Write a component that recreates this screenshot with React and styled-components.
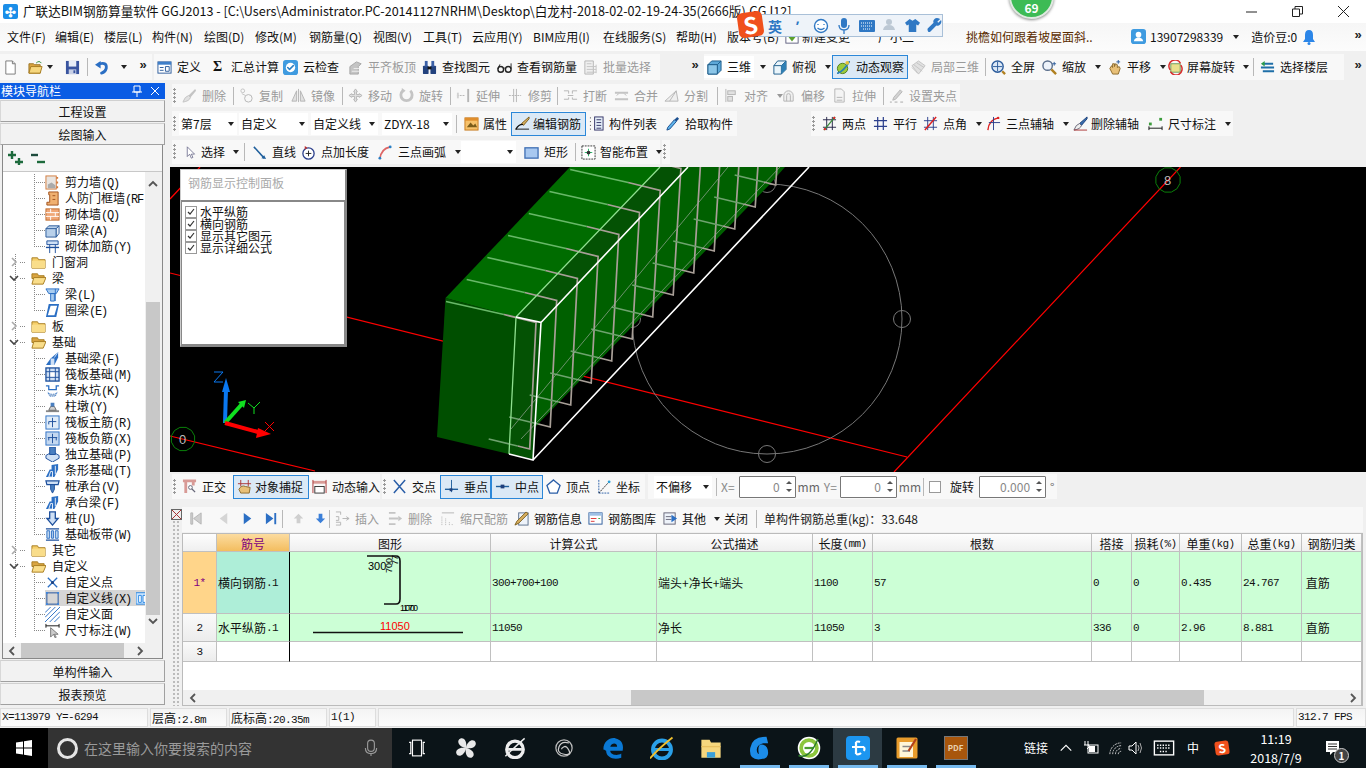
import React from "react"
import styled, { createGlobalStyle } from "styled-components"

const UI = `"Noto Sans CJK SC", "Noto Sans", sans-serif`
const MONO = `"Liberation Mono", "Noto Sans CJK SC", monospace`

const Global = createGlobalStyle`
  html, body { margin: 0; padding: 0; background: #f0f0f0; overflow: hidden; }
  * { box-sizing: border-box; }
`

const Page = styled.div`
  position: relative;
  width: 1366px;
  height: 768px;
  overflow: hidden;
  display: flex;
  flex-direction: column;
  background: #f0f0f0;
  color: #111;
  font: 12px/16px ${UI};
`

/* ---------- icons ---------- */
const S = { fill: "none", strokeLinecap: "round", strokeLinejoin: "round" }
const icons = {
  new: <><path d="M3 1h7l3 3v11H3z" fill="#fff" stroke="#777" /><path d="M10 1v3h3" fill="#ddd" stroke="#777" /></>,
  open: <><path d="M1 4h5l1 1h6v9H1z" fill="#d9a441" stroke="#9a7424" /><path d="M3 7h12l-2 7H1z" fill="#f6d77e" stroke="#a67c20" /><path d="M9 3q3-3 5 0" stroke="#2c8a3c" {...S} /></>,
  save: <><rect x="1" y="1" width="14" height="14" fill="#39549f" /><rect x="4" y="1" width="8" height="6" fill="#e8edf7" /><rect x="4" y="10" width="8" height="5" fill="#c8d0e6" /><rect x="9" y="11" width="2" height="3" fill="#39549f" /></>,
  undo: <><path d="M5 4Q13 2 12 9Q11 13 7 14" stroke="#2b6fc4" strokeWidth="3" {...S} /><path d="M0 5l6-4v8z" fill="#2b6fc4" /></>,
  define: <><rect x="1" y="2" width="14" height="12" fill="#fff" stroke="#2a5a9a" /><rect x="1" y="2" width="14" height="3" fill="#3f7fc9" /><path d="M3 8h4M3 11h4M9 7v5h4V7z" stroke="#2a5a9a" fill="none" /></>,
  cloud: <><rect x="0" y="0" width="16" height="16" rx="3" fill="#3f9be0" /><circle cx="8" cy="8" r="5" fill="#fff" /><path d="M5 8l2 2 4-4" stroke="#2b7fc4" strokeWidth="1.6" {...S} /></>,
  alignTop: <><path d="M2 15V7l7-5 5 2-3 3v8z" fill="#bbb" stroke="#999" /><path d="M4 12h8M6 9h6" stroke="#eee" /></>,
  binoc: <><rect x="1" y="6" width="6" height="9" rx="1" fill="#23427e" /><rect x="9" y="6" width="6" height="9" rx="1" fill="#23427e" /><rect x="3" y="1" width="3" height="6" fill="#3a5fa6" /><rect x="10" y="1" width="3" height="6" fill="#3a5fa6" /><rect x="6" y="7" width="4" height="3" fill="#111" /></>,
  glasses: <><circle cx="4" cy="10" r="3" stroke="#222" strokeWidth="1.5" fill="none" /><circle cx="12" cy="10" r="3" stroke="#222" strokeWidth="1.5" fill="none" /><path d="M7 9q1-1 2 0M1 9l2-4M15 9V4" stroke="#222" {...S} /></>,
  batch: <><path d="M2 1h9v14H2z" fill="#eee" stroke="#aaa" /><path d="M4 4h5M4 7h10M4 10h10M4 13h10M14 5v9" stroke="#bbb" fill="none" /></>,
  cube: <><path d="M1 5l4-4h10v10l-4 4H1z" fill="#5ea8d8" stroke="#1d5c8a" /><path d="M1 5h10v10M11 5l4-4" stroke="#1d5c8a" fill="none" /><path d="M1 5h10v10H1z" fill="#8cc6e8" stroke="#1d5c8a" /></>,
  top: <><path d="M2 6l4-5h9v9l-5 5H2z" fill="#eaf5fb" stroke="#1d5c8a" /><path d="M2 6h8v9M10 6l5-5" stroke="#1d5c8a" fill="none" /><path d="M10 6l5-5v9l-5 5z" fill="#2f7fb4" /></>,
  orbit: <><circle cx="7" cy="9" r="5.5" fill="#9ecb3a" stroke="#4d7c1a" /><path d="M2 14Q8 12 14 2" stroke="#2a7fb5" strokeWidth="2" {...S} /><circle cx="12" cy="3" r="2" fill="#e8c23a" /></>,
  local3d: <><path d="M1 6l7-5 7 5-7 9z" fill="#ddd" stroke="#bbb" /><path d="M3 5l9 7M6 3l8 5M1 8l6 6" stroke="#bbb" fill="none" /></>,
  fit: <><circle cx="7" cy="7" r="6" fill="#dbe8f6" stroke="#2c5c9c" strokeWidth="1.5" /><path d="M7 2v10M2 7h10" stroke="#2c5c9c" /><path d="M12 12l3 3" stroke="#b08020" strokeWidth="2.5" /></>,
  zoom: <><circle cx="6" cy="6" r="5" fill="#eef3fa" stroke="#5b6f8c" strokeWidth="1.5" /><path d="M10 10l5 5" stroke="#b08020" strokeWidth="2.5" /><path d="M13 2v4M11 4h4" stroke="#2c5c9c" /></>,
  pan: <><path d="M3 9l2-3 1 2V4h2v3l1-3 2 1v3l2-1 1 2-2 6H6z" fill="#e8c078" stroke="#8c6a2c" /><path d="M12 0v4M10 2h4" stroke="#2c5c9c" /></>,
  spin: <><rect x="3" y="4" width="10" height="9" fill="#eadf8c" stroke="#6a9c5c" /><path d="M2 10A6.500 6.500 0 0 1 13 3" stroke="#d82c2c" strokeWidth="1.6" {...S} /><path d="M14 6A6.500 6.500 0 0 1 3 13" stroke="#d82c2c" strokeWidth="1.6" {...S} /></>,
  floor: <><path d="M1 8h14M3 12h12M4 4h10" stroke="#1f6fa8" strokeWidth="2" /><path d="M5 1L1 4l4 3z" fill="#2c9c4c" /></>,
  erase: <><path d="M14 1L7 8l2 2 6-7z" fill="#bbb" /><path d="M7 8q-4 1-6 7 7-1 8-5z" fill="#ddd" stroke="#bbb" /></>,
  copy: <><circle cx="4" cy="3" r="2" stroke="#bbb" fill="none" /><circle cx="10" cy="11" r="4" stroke="#aaa" fill="none" /><path d="M3 6l4 2" stroke="#bbb" /></>,
  mirror: <><path d="M1 14L6 3v11zM15 14L10 3v11z" fill="#ddd" stroke="#aaa" /><path d="M8 1v14" stroke="#aaa" /></>,
  move: <path d="M8 1l2 3H9v3h3V6l3 2-3 2V9H9v3h1l-2 3-2-3h1V9H4v1L1 8l3-2v1h3V4H6z" fill="#ddd" stroke="#aaa" />,
  rotate: <><path d="M4 3A6 6 0 1 0 12 3" stroke="#bbb" strokeWidth="3" fill="none" /><path d="M3 0v6l4-3z" fill="#bbb" /></>,
  extend: <><path d="M1 8h8" stroke="#aaa" strokeDasharray="2 1" /><rect x="1" y="5" width="2" height="6" fill="#ccc" /><path d="M13 1v14" stroke="#aaa" strokeWidth="2" /></>,
  trim: <><path d="M1 8h13" stroke="#aaa" strokeDasharray="2 1" /><path d="M6 1v14M9 1v14" stroke="#aaa" /></>,
  breakIc: <><path d="M1 3h5v3M15 3h-5v3M1 12h5v-2M15 12h-5v-2" stroke="#aaa" fill="none" /><path d="M5 8h6" stroke="#aaa" /></>,
  merge: <><path d="M1 5h14M1 12h14" stroke="#bbb" strokeWidth="2" /><path d="M3 8l2-2M13 8l-2-2" stroke="#aaa" fill="none" /></>,
  split: <><path d="M1 14h14L13 3z" stroke="#aaa" fill="#eee" /><path d="M6 14l7-11" stroke="#aaa" /></>,
  alignIc: <><path d="M2 1v14" stroke="#aaa" /><rect x="4" y="3" width="8" height="4" fill="#ddd" stroke="#aaa" /><rect x="4" y="9" width="5" height="5" fill="#ddd" stroke="#aaa" /></>,
  offset: <><path d="M3 14V8a5 5 0 0 1 10 0v6z" fill="#eee" stroke="#aaa" /><path d="M6 14V8a2 2 0 0 1 4 0v6" stroke="#aaa" fill="none" /></>,
  stretch: <><path d="M3 1h7l3 3v11H3z" fill="#f4f4f4" stroke="#aaa" /><path d="M5 10h6M5 13h6" stroke="#aaa" /></>,
  grips: <><path d="M12 2L5 10l-1 3 3-1 7-8z" fill="#ccc" stroke="#aaa" /><path d="M1 15h2M6 15h3M12 15h3" stroke="#999" /></>,
  prop: <><rect x="1" y="2" width="14" height="13" fill="#f6c16a" stroke="#c57a1f" /><path d="M1 2h14v3H1z" fill="#e08e2c" /><path d="M3 12l4-5 3 3 2-2 2 4z" fill="#7a5c1a" /></>,
  editBar: <><path d="M15 1L7 8l2 2 6-7z" fill="#d9b060" stroke="#7a5c1a" /><path d="M1 14q3-5 7-5" stroke="#111" strokeWidth="1.4" {...S} /><path d="M1 14h14" stroke="#111" /></>,
  list: <><path d="M1 2h2M1 6h2M1 10h2M1 14h2" stroke="#333" strokeDasharray="1 1" /><rect x="6" y="1" width="9" height="14" fill="#e4eef8" stroke="#336" /><path d="M8 4h5M8 7h5M8 10h5M8 13h5" stroke="#336" /></>,
  pick: <><path d="M13 1l2 2-3 3-2-2z" fill="#1c4f8f" /><path d="M10 4l2 2-7 8-3 1 1-3z" fill="#5fb4ea" stroke="#1c4f8f" /></>,
  twoPt: <><path d="M1 4h14M1 12h14M5 1v14M11 1v14" stroke="#224" fill="none" /><path d="M2 15L14 1" stroke="#3a8a3a" strokeWidth="1.4" /><circle cx="13" cy="2" r="1.2" fill="#d22" /><circle cx="3" cy="14" r="1.2" fill="#d22" /></>,
  parallel: <path d="M1 5h14M1 11h14M5 1v14M11 1v14" stroke="#2b3f8c" strokeWidth="1.3" fill="none" />,
  angle: <><path d="M1 5h14M1 12h14M5 1v14M11 1v14" stroke="#2b3f8c" fill="none" /><path d="M2 15L14 1" stroke="#d22" strokeWidth="1.6" /></>,
  arcAx: <><path d="M2 15Q3 4 13 2" stroke="#d22" strokeWidth="1.5" fill="none" /><path d="M8 1v14M3 7h12" stroke="#2b3f8c" fill="none" /><circle cx="13" cy="2" r="1.3" fill="#d22" /></>,
  delAx: <><path d="M15 1L7 8l2 2 6-7z" fill="#3a6fb0" stroke="#1c3f78" /><path d="M7 8q-4 1-6 7 7-1 8-5z" fill="#eee" stroke="#667" /><path d="M1 15h14" stroke="#a33" /></>,
  dimIc: <><path d="M1 11v4M15 11v4M1 13h14" stroke="#111" fill="none" /><rect x="1" y="7" width="3" height="3" fill="#3c9c3c" /><rect x="12" y="2" width="3" height="3" fill="#3c9c3c" /></>,
  cursor: <path d="M4 1v12l3-3 2 5 2-1-2-4h4z" fill="#fff" stroke="#6a6a8a" />,
  lineIc: <><path d="M2 2l11 12" stroke="#1f5f9c" strokeWidth="1.6" /><path d="M15 15l-5-1 3-3z" fill="#1f5f9c" /></>,
  addLen: <><circle cx="8" cy="9" r="6" stroke="#2b3f8c" strokeWidth="1.4" fill="#fff" /><path d="M8 6v6M5 9h6" stroke="#222" /><path d="M4 1l3 2-3 2z" fill="#b33" /></>,
  arc3: <><path d="M2 15Q3 4 13 2" stroke="#d66" strokeWidth="1.7" fill="none" /><circle cx="13" cy="2" r="1.5" fill="#2b7fc4" /><circle cx="2" cy="14" r="1.5" fill="#2b7fc4" /></>,
  rectIc: <rect x="1" y="3" width="14" height="11" fill="#a8c8f0" stroke="#3f6fb4" strokeWidth="1.4" />,
  smart: <><rect x="1" y="1" width="14" height="14" fill="#fff" stroke="#333" strokeDasharray="2 1" /><path d="M8 4v8M4 8h8" stroke="#2b6" /><circle cx="8" cy="8" r="2" fill="#333" /></>,
  ortho: <><path d="M1 2h14M4 2v13M12 2v5" stroke="#d89a96" strokeWidth="3" fill="none" /><path d="M9 9l5 5" stroke="#667" strokeWidth="1.4" /><circle cx="9" cy="9" r="2" stroke="#667" fill="#fff" /></>,
  snap: <><path d="M4 1v7M12 1v7M1 5h14" stroke="#a33" fill="none" /><path d="M2 11q3-5 7-3l5 1-1 6H4z" fill="#e8c078" stroke="#8c6a2c" /></>,
  inputIc: <><path d="M1 2h14v3H1z" fill="#d89a96" /><path d="M1 1v14M15 1v14" stroke="#a33" /><rect x="3" y="8" width="10" height="7" fill="#fff" stroke="#333" /></>,
  cross: <path d="M2 1l12 14M14 1L2 15" stroke="#2b5fa8" strokeWidth="1.6" />,
  perp: <><path d="M1 11h14" stroke="#1f5f9c" strokeWidth="1.5" /><path d="M8 1v13" stroke="#1f5f9c" /><rect x="6" y="10" width="3" height="3" fill="#1f3f7c" /></>,
  mid: <><path d="M1 8h14" stroke="#1f5f9c" strokeWidth="1.5" /><rect x="6" y="6" width="4" height="4" fill="#1f3f7c" /></>,
  vertex: <path d="M8 1l7 6-3 8H4L1 7z" fill="#fff" stroke="#2b5fa8" strokeWidth="1.4" />,
  coord: <><path d="M3 15V1M3 15h12" stroke="#2b5fa8" strokeDasharray="2 1" /><path d="M3 15L14 3" stroke="#222" strokeDasharray="2 1" /><circle cx="14" cy="3" r="1.5" fill="#2b9fd8" /></>,
  first: <path d="M3 2h2v12H3zM14 2v12L6 8z" fill="#c8c8c8" stroke="#aaa" />,
  prev: <path d="M12 2v12L4 8z" fill="#cfcfcf" />,
  next: <path d="M4 2v12l8-6z" fill="#2c6fc4" />,
  last: <path d="M2 2v12l8-6zM11 2h2v12h-2z" fill="#2c6fc4" />,
  up: <path d="M8 3l5 5h-3v5H6V8H3z" fill="#c8c8c8" />,
  down: <path d="M8 13l5-5h-3V3H6v5H3z" fill="#3c7fd8" />,
  ins: <><path d="M1 1h5v3M1 12h5v3H1M1 6h3v4H1" stroke="#aaa" fill="none" /><path d="M8 8h7M12 6l3 2-3 2" stroke="#aaa" fill="none" /></>,
  del: <><path d="M1 2h7M1 8h10M1 14h7" stroke="#bbb" strokeWidth="2" /><path d="M11 5l4 3-4 3" fill="#bbb" /></>,
  scale: <><path d="M2 15V5M6 15V8M10 15v-4M13 15v-1" stroke="#aaa" strokeDasharray="1 1" /><path d="M2 2h13" stroke="#aaa" /></>,
  info: <><rect x="5" y="2" width="10" height="13" fill="#eef3fa" stroke="#5b6f8c" /><path d="M13 1L3 11l-2 4 4-2L15 3z" fill="#d9b060" stroke="#7a5c1a" /></>,
  lib: <><rect x="1" y="2" width="14" height="12" fill="#fff" stroke="#2a5a9a" /><rect x="1" y="2" width="14" height="3" fill="#9ec0e4" /><path d="M3 8h6M3 11h4" stroke="#d33" /><path d="M11 8h2" stroke="#3a3" /></>,
  other: <><rect x="1" y="2" width="12" height="12" fill="#eef3fa" stroke="#667" /><path d="M3 6h6M3 9h6" stroke="#667" /><path d="M9 4l6 4-6 4z" fill="#2c6fc4" /></>,
  shear: <><rect x="1" y="1" width="11" height="14" fill="#e8e4e0" stroke="#d27a3c" /><path d="M3 10l4-2 4 3v3H3z" fill="#aaa" /><path d="M13 2v2M13 7v2M13 12v2" stroke="#d27a3c" strokeWidth="2" /></>,
  door: <path d="M4 1h10v14H2v-3h3V4H4zM8 5h3M8 9h3" fill="#f0b070" stroke="#a0501c" />,
  brick: <><rect x="1" y="2" width="14" height="12" fill="#f0a878" stroke="#c06a2c" /><path d="M1 6h14M1 10h14M6 2v4M11 6v4M6 10v4" stroke="#fff" /></>,
  hidden: <><path d="M1 6l3-3h11l-3 3v9H1z" fill="#b8d0ea" stroke="#2a5a9a" /><path d="M12 6l3-3v8l-3 4z" fill="#e8f0f8" stroke="#2a5a9a" /><path d="M1 6h11" stroke="#2a5a9a" /></>,
  rein: <><path d="M2 2h12v4H2zM5 6v9M11 6v9" fill="#cfe0f5" stroke="#1d4f9c" /><path d="M1 9h14" stroke="#1d4f9c" strokeWidth="1.5" /></>,
  tbeam: <><path d="M1 2h14l-3 5H4zM6 7h4v8H6z" fill="#a8ccf0" stroke="#2b6fc4" /><path d="M11 2v13" stroke="#2b6fc4" /></>,
  ring: <path d="M4 1h11l-3 14H1zM6 3l-3 10h7l3-10z" fill="#2b6fc4" fillRule="evenodd" />,
  fbeam: <><path d="M1 15l5-7 8-7v6l-4 8z" fill="#2b6fc4" /><path d="M6 8h4v7H6z" fill="#cfe0f5" /><path d="M10 7l4-6" stroke="#cfe0f5" /></>,
  raft: <><rect x="1" y="1" width="14" height="14" fill="#cfe0f5" stroke="#1d4f9c" strokeWidth="1.4" /><rect x="5" y="5" width="6" height="6" fill="#fff" stroke="#1d4f9c" /><path d="M1 5h4M11 5h4M1 11h4M11 11h4M5 1v4M11 1v4M5 11v4M11 11v4" stroke="#1d4f9c" /></>,
  pit: <><path d="M1 3h3v4h8V3h3" stroke="#2b6fc4" strokeWidth="1.4" fill="none" /><path d="M3 10q5 4 10 0l-2 4H5z" fill="#b8c8dc" stroke="#2b6fc4" strokeDasharray="1 1" /></>,
  pier: <><path d="M1 12h14v2H1z" fill="#888" /><path d="M4 12l2-4h4l2 4z" fill="#cfcfcf" stroke="#666" /><rect x="6" y="4" width="4" height="4" fill="#4a7fc0" /></>,
  mainBar: <><rect x="1" y="1" width="14" height="14" fill="#e0ecf8" stroke="#2b6fc4" /><path d="M8 3v10M4 7h8M4 7v3" stroke="#1d4f9c" fill="none" /></>,
  negBar: <><rect x="1" y="1" width="14" height="14" fill="#c4d8f0" stroke="#2b6fc4" /><path d="M8 3v10M3 7h10M4 7v3M12 7v3" stroke="#1d4f9c" fill="none" /></>,
  iso: <><path d="M1 9l7-4 7 4v3l-7 4-7-4z" fill="#cfe0f5" stroke="#1d4f9c" /><rect x="5" y="0" width="6" height="8" fill="#4a7fc0" stroke="#1d4f9c" /></>,
  strip: <><path d="M1 15l4-8h2v-5l7-1v6l-4 8z" fill="#2b6fc4" /><path d="M4 15l2-6h2v6zM11 3v9" stroke="#eef3fa" fill="none" /></>,
  cap: <><path d="M1 2h14l-1 4H2z" fill="#cfe0f5" stroke="#1d4f9c" strokeWidth="1.3" /><path d="M6 6h4v5l-2 4-2-4z" fill="#4a7fc0" stroke="#1d4f9c" /></>,
  pile: <><path d="M5 1h6v7h3l-6 7-6-7h3z" fill="#cfe0f5" stroke="#1d4f9c" strokeWidth="1.4" /></>,
  band: <><path d="M1 2h14M1 14h14" stroke="#1d4f9c" strokeWidth="1.5" /><path d="M2 4h3v8H2zM7 4h2v8H7zM11 4h3v8h-3z" fill="#bcd4ee" stroke="#2b6fc4" /></>,
  point: <><path d="M3 3l10 10M13 3L3 13" stroke="#2b6fc4" strokeWidth="1.4" /><circle cx="8" cy="8" r="1.6" fill="#1d3f7c" /></>,
  rectLine: <><rect x="2" y="2" width="12" height="12" fill="none" stroke="#1d4f9c" /><path d="M1 1h2v2H1zM13 1h2v2h-2zM1 13h2v2H1zM13 13h2v2h-2z" fill="#3c86e0" /></>,
  hatch: <path d="M0 6l6-6M0 11L11 0M0 16L16 0M5 16L16 5M10 16l6-6" stroke="#2b6fc4" />,
  dimCur: <><path d="M1 3h14M1 1v4M15 1v4" stroke="#111" /><path d="M6 5v10l3-3 2 4 1-1-2-3h4z" fill="#ccc" stroke="#777" /></>,
  minilist: <><rect x="0" y="2" width="14" height="13" fill="#cbe6ff" stroke="#1c7fe0" /><path d="M3 5h3v8H3zM8 5h3v8H8z" fill="#fff" stroke="#1c7fe0" /></>,
  plus: <><path d="M5 1v8M1 5h8" stroke="#1d6a3c" strokeWidth="2.4" /><path d="M12 8v7M8 12h8" stroke="#1d6a3c" strokeWidth="2.4" /></>,
  minus: <><path d="M1 5h7" stroke="#1d4a3c" strokeWidth="2.4" /><path d="M7 12h8" stroke="#1d6a3c" strokeWidth="2.4" /></>,
  folder: <><path d="M1 3h6l1 2h7v9H1z" fill="#f6cf6a" stroke="#a67c20" /><path d="M1 6h14v8H1z" fill="#f9dd8a" /></>,
  folderOpen: <><path d="M1 3h6l1 2h6v3H1z" fill="#d9a441" stroke="#a67c20" /><path d="M3 7h13l-3 7H1z" fill="#f9dd8a" stroke="#a67c20" /></>,
  taskview: <><rect x="4" y="1" width="8" height="14" fill="none" stroke="#fff" /><path d="M1 3h1.500v10H1M15 3h-1.500v10H15" stroke="#fff" fill="none" /></>,
  fan: <path d="M8 8C2 7 1 2 4 1s5 3 4 7c1-6 6-7 7-4s-3 5-7 4c6 1 7 6 4 7s-5-3-4-7c-1 6-6 7-7 4s3-5 7-4z" fill="#e8e8e8" />,
  ieWhite: <><circle cx="8" cy="9" r="6" fill="none" stroke="#eee" strokeWidth="2.4" /><path d="M3 9h10" stroke="#eee" strokeWidth="2" /><path d="M1 14Q7 8 15 1" stroke="#eee" fill="none" /></>,
  swirl: <><circle cx="8" cy="8" r="6.500" fill="none" stroke="#bbb" /><path d="M12 4Q6 2 4 7t4 6 4-3-4-3-2 2" stroke="#ccc" fill="none" /></>,
  edge: <path d="M1 9C1 3 6 0 10 1s6 4 5 9H6c0 3 5 4 8 2v3c-5 2-11 0-11-5 0 0-1-1-2-1zM6 7h5c0-3-4-3-5 0z" fill="#0a78d4" fillRule="evenodd" />,
  ie: <><circle cx="8" cy="9" r="6" fill="none" stroke="#2aa0e8" strokeWidth="2.6" /><path d="M3 9h10" stroke="#2aa0e8" strokeWidth="2" /><path d="M0 15Q6 8 15 1" stroke="#f0c030" strokeWidth="1.2" fill="none" /></>,
  explorer: <><path d="M1 2h6l1 2h7v11H1z" fill="#f6d77e" /><path d="M5 15v-4h6v4" fill="#3a9fd8" /><path d="M1 7h14" stroke="#e8c060" /></>,
  gApp: <path d="M12 1Q3 1 2 8t5 7 6-4-3-5-3 3 2 3q-3 0-3-3t4-4h3z" fill="#1c8ce8" />,
  ieGreen: <><circle cx="8" cy="8" r="7" fill="#8cc63c" stroke="#fff" /><circle cx="8" cy="8" r="4" fill="#fff" /><path d="M5 8h6" stroke="#4a9c2c" strokeWidth="1.5" /><path d="M1 13Q8 16 14 2" stroke="#2c7c2c" fill="none" /></>,
  note: <><rect x="1" y="1" width="14" height="14" rx="1" fill="#e89c2c" /><rect x="3" y="4" width="9" height="10" fill="#fff6d8" /><path d="M5 7h5M5 10h5" stroke="#888" /><path d="M14 2l-5 8" stroke="#b3401c" strokeWidth="1.5" /></>,
  batt: <><rect x="5" y="5" width="10" height="8" fill="none" stroke="#fff" /><rect x="6" y="6" width="6" height="6" fill="#fff" /><path d="M2 1v4M5 1v4M1 5h5v2l-2 2" stroke="#fff" fill="none" /></>,
  wifi: <path d="M2 14a12 12 0 0 1 12-12M5 14a9 9 0 0 1 9-9M8 14a6 6 0 0 1 6-6M11 14a3 3 0 0 1 3-3" stroke="#ddd" strokeDasharray="2 1" fill="none" />,
  vol: <><path d="M1 6h3l4-4v12l-4-4H1z" fill="none" stroke="#fff" /><path d="M10 5q2 3 0 6M12 3q3 5 0 10" stroke="#aaa" fill="none" /></>,
  kbd: <><rect x="1" y="3" width="14" height="10" fill="none" stroke="#fff" /><path d="M3 6h10M3 8h10M5 10.500h6" stroke="#fff" strokeDasharray="1 1" /></>,
  up2: <path d="M2 11l6-6 6 6" stroke="#fff" fill="none" strokeWidth="1.3" />,
  mic: <><rect x="5" y="1" width="6" height="10" rx="3" fill="none" stroke="#999" /><path d="M3 8q0 5 5 5t5-5M8 13v2" stroke="#999" fill="none" /></>,
  user: <><rect x="0" y="0" width="16" height="16" rx="3" fill="#3f9be0" /><circle cx="8" cy="6" r="3" fill="#fff" /><path d="M3 13q1-4 5-4t5 4z" fill="#fff" /></>,
  bell: <><path d="M8 1q4 0 4 5v4l2 3H2l2-3V6q0-5 4-5z" fill="#2c86e8" /><circle cx="8" cy="14.500" r="1.500" fill="#2c86e8" /></>,
  newChange: <><rect x="1" y="1" width="14" height="14" fill="#fff" stroke="#557" /><path d="M8 5l4 3-4 5-4-5z" fill="#5aa02c" /></>,
  notifBox: <><path d="M1 1h13v11H8l-3 3v-3H1z" fill="#fff" /><path d="M3 4h9M3 6.500h9M3 9h9" stroke="#333" /></>,
  smile: <><circle cx="8" cy="8" r="6.500" stroke="#2f78c4" strokeWidth="1.4" fill="#fff" /><path d="M5 6v1M11 6v1M4.500 10q3.500 3 7 0" stroke="#2f78c4" strokeWidth="1.3" fill="none" /></>,
  imeMic: <><rect x="5" y="0" width="6" height="10" rx="3" fill="#2f78c4" /><path d="M3 7q0 5 5 5t5-5M8 12v4" stroke="#2f78c4" fill="none" strokeWidth="1.3" /></>,
  imeKbd: <><rect x="0" y="2" width="16" height="12" rx="1" fill="#2f78c4" /><path d="M2 5h12M2 8h12M4 11h8" stroke="#fff" strokeDasharray="1 1" /></>,
  imeUser: <><circle cx="7" cy="4" r="3" fill="#bcc8d4" /><path d="M1 12q1-5 6-5t6 5z" fill="#bcc8d4" /></>,
  shirt: <path d="M5 1l3 2 3-2 5 4-2 3-2-1v8H4V7L2 8 0 5z" fill="#2f78c4" />,
  wrench: <path d="M14 1l-3 3 1 1 3-3q1 3-1 5t-4 1l-6 6q-2 2-3 0t0-3l6-6q-1-2 1-4t6 0z" fill="#2f78c4" />,
}

const IconBox = styled.svg`
  display: block;
  flex: none;
  width: ${p => p.$s || 15}px;
  height: ${p => p.$s || 15}px;
  opacity: ${p => (p.$dim ? 0.85 : 1)};
`
const Ic = ({ n, s, dim }) => (
  <IconBox viewBox="0 0 16 16" $s={s} $dim={dim}>{icons[n]}</IconBox>
)

/* ---------- title and menu ---------- */
const TitleBar = styled.div`
  height: 23px;
  background: #fff;
  display: flex;
  align-items: center;
  padding-left: 3px;
  gap: 5px;
  font-size: 12.600px;
  white-space: nowrap;
`
const AppLogo = styled.div`
  width: 15px;
  height: 15px;
  border-radius: 2px;
  background: #1b8ee8;
  color: #fff;
  font: bold 13px/15px ${UI};
  text-align: center;
`
const WinButtons = styled.div`
  position: absolute;
  top: 0;
  right: 0;
  height: 23px;
  display: flex;
`
const WinBtn = styled.div`
  width: 46px;
  display: flex;
  align-items: center;
  justify-content: center;
`
const MenuBar = styled.div`
  height: 29px;
  display: flex;
  align-items: center;
  background: linear-gradient(#f6f6f6, #fcfcfc);
  white-space: nowrap;
`
const MenuItem = styled.div`
  width: ${p => p.$w}px;
  flex: none;
  padding-left: 7px;
  display: flex;
  align-items: center;
  gap: ${p => p.$gap ?? 3}px;
`
const NewsText = styled.div`
  width: ${p => p.$w}px;
  flex: none;
  color: #5a2c00;
  padding-left: 4px;
`

/* ---------- toolbars ---------- */
const Row = styled.div`
  height: ${p => p.$h}px;
  display: flex;
  align-items: ${p => p.$align || "center"};
  padding-left: ${p => p.$pl || 0}px;
  padding-top: ${p => p.$pt || 0}px;
  flex: none;
`
const Bar = styled.div`
  height: ${p => p.$h || 26}px;
  width: ${p => p.$w ? `${p.$w}px` : "auto"};
  margin-left: ${p => p.$ml || 0}px;
  background: #f8f8f8;
  display: flex;
  align-items: center;
  flex: none;
  white-space: nowrap;
`
const Grip = styled.div`
  flex: none;
  width: ${p => p.$w || 6}px;
  height: 16px;
  margin-left: ${p => p.$ml || 1}px;
  background: radial-gradient(circle at 1.500px 1.500px, #999 1px, transparent 1.300px) 0 0 / 3px 4px repeat-y;
`
const Sep = styled.div`
  flex: none;
  width: ${p => p.$w}px;
  height: 18px;
  background: linear-gradient(#b8b8b8, #b8b8b8) center / 1px 100% no-repeat;
`
const ToolBtn = styled.div`
  flex: none;
  width: ${p => p.$w}px;
  height: ${p => (p.$on ? 24 : 22)}px;
  padding-left: 3px;
  display: flex;
  align-items: center;
  gap: ${p => p.$gap ?? 5}px;
  color: ${p => (p.$off ? "#9a9a9a" : "#111")};
  background: ${p => (p.$on ? "#dbe9f6" : p.$white ? "#fff" : "transparent")};
  border: ${p => (p.$on ? "1px solid #2b87d8" : "none")};
`
const Caret = styled.i`
  flex: none;
  width: 0;
  height: 0;
  margin-left: ${p => p.$ml ?? 4}px;
  border: 3px solid transparent;
  border-top: 4px solid ${p => p.$c || "#222"};
  border-bottom: 0;
`
const Tool = ({ n, t, w, on, off, caret, gap, s, white }) => (
  <ToolBtn $w={w} $on={on} $off={off} $gap={gap} $white={white}>
    {n && <Ic n={n} s={s} dim={off} />}
    {t && <span>{t}</span>}
    {caret && <Caret $c={off ? "#999" : "#222"} />}
  </ToolBtn>
)
const Tools = ({ items }) =>
  items.map((it, i) => (it.sep ? <Sep key={i} $w={it.sep} /> : <Tool key={i} {...it} />))

const Select = styled.div`
  flex: none;
  width: ${p => p.$w}px;
  height: 22px;
  margin-left: ${p => p.$ml || 0}px;
  padding: 0 3px 0 2px;
  background: ${p => (p.$plain ? "transparent" : "#fff")};
  display: flex;
  align-items: center;
  justify-content: ${p => (p.$end ? "flex-end" : "space-between")};
`
const More = styled.div`
  flex: none;
  width: ${p => p.$w}px;
  margin-left: ${p => p.$ml || 0}px;
  font: bold 13px/14px "Liberation Sans", sans-serif;
  text-align: center;
  height: 18px;
  color: #222;
`
const IconSigma = styled.span`
  width: 15px;
  font: bold 14px/16px "Liberation Serif", serif;
  text-align: center;
`
const row1b = [
  { n: "define", t: "定义", w: 53 },
  { n: "cloud", t: "云检查", w: 65 },
  { n: "alignTop", t: "平齐板顶", w: 74, off: true },
  { n: "binoc", t: "查找图元", w: 75 },
  { n: "glasses", t: "查看钢筋量", w: 86 },
  { n: "batch", t: "批量选择", w: 80, off: true },
]
const row1c = [
  { n: "top", t: "俯视", w: 63, caret: true },
  { n: "orbit", t: "动态观察", w: 76, on: true },
  { n: "local3d", t: "局部三维", w: 75, off: true },
  { sep: 5 },
  { n: "fit", t: "全屏", w: 51 },
  { n: "zoom", t: "缩放", w: 65, caret: true },
  { n: "pan", t: "平移", w: 61, caret: true },
  { n: "spin", t: "屏幕旋转", w: 84, caret: true, gap: 4 },
  { sep: 8 },
  { n: "floor", t: "选择楼层", w: 80 },
]
const row2 = [
  { n: "erase", t: "删除", w: 52, off: true },
  { sep: 5 },
  { n: "copy", t: "复制", w: 52, off: true },
  { n: "mirror", t: "镜像", w: 51, off: true },
  { sep: 6 },
  { n: "move", t: "移动", w: 51, off: true },
  { n: "rotate", t: "旋转", w: 51, off: true },
  { sep: 6 },
  { n: "extend", t: "延伸", w: 52, off: true },
  { n: "trim", t: "修剪", w: 49, off: true },
  { sep: 6 },
  { n: "breakIc", t: "打断", w: 51, off: true },
  { n: "merge", t: "合并", w: 50, off: true },
  { n: "split", t: "分割", w: 52, off: true },
  { sep: 8 },
  { n: "alignIc", t: "对齐", w: 57, off: true, caret: true },
  { n: "offset", t: "偏移", w: 51, off: true },
  { n: "stretch", t: "拉伸", w: 52, off: true },
  { sep: 5 },
  { n: "grips", t: "设置夹点", w: 75, off: true },
]
const row3a = [
  { sep: 9 },
  { n: "prop", t: "属性", w: 50, gap: 4 },
  { n: "editBar", t: "编辑钢筋", w: 75, on: true, gap: 3 },
  { n: "list", t: "构件列表", w: 76 },
  { n: "pick", t: "拾取构件", w: 74 },
]
const row3b = [
  { n: "twoPt", t: "两点", w: 51 },
  { n: "parallel", t: "平行", w: 50 },
  { n: "angle", t: "点角", w: 63, caret: true },
  { n: "arcAx", t: "三点辅轴", w: 87, caret: true },
  { n: "delAx", t: "删除辅轴", w: 75, gap: 3 },
  { n: "dimIc", t: "尺寸标注", w: 88, caret: true },
]
const row4a = [
  { n: "cursor", t: "选择", w: 58, caret: true, gap: 4, s: 13 },
  { sep: 10 },
  { n: "lineIc", t: "直线", w: 49 },
  { n: "addLen", t: "点加长度", w: 77 },
  { n: "arc3", t: "三点画弧", w: 84, caret: true },
]
const row4b = [
  { n: "rectIc", t: "矩形", w: 51 },
  { sep: 6 },
  { n: "smart", t: "智能布置", w: 84, caret: true, gap: 4 },
]
const snapA = [
  { n: "ortho", t: "正交", w: 49 },
]
const snapB = [
  { n: "snap", t: "对象捕捉", w: 76, on: true, gap: 3 },
  { n: "inputIc", t: "动态输入", w: 76 },
]
const snapC = [
  { n: "cross", t: "交点", w: 51 },
  { n: "perp", t: "垂点", w: 51, on: true },
  { n: "mid", t: "中点", w: 52, on: true },
  { n: "vertex", t: "顶点", w: 50 },
  { n: "coord", t: "坐标", w: 52 },
]
const gridTools = [
  { n: "first", w: 28, off: true },
  { n: "prev", w: 24, off: true },
  { n: "next", w: 24 },
  { n: "last", w: 16 },
  { sep: 11 },
  { n: "up", w: 22, off: true },
  { n: "down", w: 17 },
  { sep: 5 },
  { n: "ins", t: "插入", w: 53, off: true },
  { n: "del", t: "删除", w: 52, off: true },
  { n: "scale", t: "缩尺配筋", w: 74, off: true },
  { n: "info", t: "钢筋信息", w: 74 },
  { n: "lib", t: "钢筋图库", w: 75 },
  { n: "other", t: "其他", w: 61, caret: true, gap: 4 },
  { t: "关闭", w: 31 },
  { sep: 8 },
]

/* ---------- body ---------- */
const Body = styled.div`
  flex: none;
  height: 623px;
  display: flex;
`
const Left = styled.div`
  flex: none;
  width: 165px;
  height: 622px;
  display: flex;
  flex-direction: column;
`
const PaneHead = styled.div`
  height: 16px;
  flex: none;
  background: #0a5ce4;
  color: #fff;
  display: flex;
  align-items: center;
  padding-right: 3px;
`
const PaneTitle = styled.span`
  flex: 1;
  padding-left: 1px;
  font-size: 12px;
`
const PaneBtn = styled.div`
  flex: none;
  height: 22px;
  margin-top: 1px;
  background: #f2f2f2;
  border: 1px solid #a0a0a0;
  border-top-color: #d0d0d0;
  border-left-color: #d8d8d8;
  text-align: center;
  line-height: 21px;
  font-size: 12px;
`
const TreeFrame = styled.div`
  flex: 1;
  min-height: 0;
  margin: 0 2px 0 2px;
  border: 1px solid #888;
  border-top: 0;
  display: flex;
  flex-direction: column;
  background: #f0f0f0;
`
const TreeTools = styled.div`
  height: 26px;
  flex: none;
  display: flex;
  align-items: center;
  gap: 7px;
  padding-left: 4px;
  background: #f5f5f5;
`
const TreeBody = styled.div`
  flex: 1;
  min-height: 0;
  display: flex;
  border-top: 1px solid #c8c8c8;
`
const TreeList = styled.div`
  flex: none;
  width: 142px;
  background: #fff;
  padding-top: 2px;
  overflow: hidden;
`
const TreeRow = styled.div`
  height: 16px;
  display: flex;
  align-items: center;
  white-space: nowrap;
  overflow: hidden;
  padding-left: ${p => (p.$leaf ? 42 : 6)}px;
  gap: ${p => (p.$leaf ? 5 : 6)}px;
  font-size: 12px;
  --dot: repeating-linear-gradient(to bottom, #888 0 1px, transparent 1px 2px);
  --doth: repeating-linear-gradient(to right, #888 0 1px, transparent 1px 2px);
  background:
    ${p => (p.$rootLine ? "var(--dot) 12px 0 / 1px 16px no-repeat," : "")}
    ${p => (p.$leaf ? `var(--dot) 31px 0 / 1px ${p.$last ? 8 : 16}px no-repeat, var(--doth) 31px 8px / 11px 1px no-repeat` : "var(--doth) 17px 8px / 6px 1px no-repeat")};
`
const TreeSelBg = styled.div`
  display: flex;
  align-items: center;
  gap: 5px;
  flex: none;
  width: 100px;
  background: #d6d6d6;
`
const Chevron = styled.svg`
  flex: none;
  width: 10px;
  height: 10px;
  margin-right: 6px;
`
const Key = styled.span`
  font: 12px ${MONO};
  letter-spacing: -1.200px;
`
const VScroll = styled.div`
  flex: 1;
  display: flex;
  flex-direction: column;
  align-items: center;
  padding: 6px 0 0;
  margin-right: 2px;
`
const ThumbV = styled.div`
  width: 14px;
  height: 313px;
  margin-top: 112px;
  background: #c8c8c8;
`
const Arrow = styled.svg`
  display: block;
  flex: none;
  width: 12px;
  height: 12px;
`
const HScroll = styled.div`
  height: ${p => p.$h || 15}px;
  flex: none;
  display: flex;
  align-items: center;
  background: #f0f0f0;
  padding-left: ${p => p.$pl || 3}px;
`
const ThumbH = styled.div`
  flex: none;
  height: 15px;
  width: ${p => p.$w}px;
  margin: 0 ${p => p.$mr || 0}px 0 ${p => p.$ml || 0}px;
  background: #c8c8c8;
`
const Right = styled.div`
  flex: none;
  width: 1201px;
  padding-left: 5px;
  display: flex;
  flex-direction: column;
`
const Scene = styled.div`
  flex: none;
  position: relative;
  height: 305px;
  background: #000;
  margin-top: 3px;
`
const Canvas = styled.svg`
  display: block;
  width: 1196px;
  height: 305px;
`
const RebarPanel = styled.div`
  position: absolute;
  left: 10px;
  top: 2px;
  width: 167px;
  height: 178px;
  background: #fff;
  border: 1px solid #ccc;
  border-right: 2px solid #888;
  border-bottom: 2px solid #888;
  display: flex;
  flex-direction: column;
`
const RebarTitle = styled.div`
  height: 30px;
  padding: 5px 0 0 7px;
  color: #aaa;
`
const RebarBox = styled.div`
  flex: 1;
  border: 1px solid #888;
  border-top: 2px solid #888;
  padding: 4px 0 0 3px;
`
const CheckRow = styled.div`
  height: 12px;
  display: flex;
  align-items: center;
  gap: 3px;
  line-height: 12px;
`
const CheckMark = styled.svg`
  width: 12px;
  height: 12px;
  flex: none;
`
const Check = () => (
  <CheckMark viewBox="0 0 12 12">
    <rect x="0.500" y="0.500" width="11" height="11" fill="#fff" stroke="#999" />
    <path d="M3 6l2 2 4-5" stroke="#333" fill="none" strokeWidth="1.200" />
  </CheckMark>
)
const Label = styled.span`
  color: ${p => p.$c || "#111"};
  margin-left: ${p => p.$ml || 0}px;
  flex: none;
`
const Spin = styled.div`
  flex: none;
  width: ${p => p.$w}px;
  height: 22px;
  margin-left: ${p => p.$ml || 0}px;
  border: 1px solid #777;
  border-radius: 1px;
  background: #fff;
  color: #888;
  display: flex;
  align-items: center;
  justify-content: flex-end;
  gap: 6px;
  padding-right: 3px;
`
const SpinArrows = styled.div`
  display: flex;
  flex-direction: column;
  gap: 5px;
`
const Up = styled.i`
  display: block;
  width: 0;
  height: 0;
  border: 3px solid transparent;
  border-bottom: 3px solid #555;
  border-top: 0;
`
const Dn = styled(Up)`
  border-bottom: 0;
  border-top: 3px solid #555;
`
const CheckEmpty = styled.div`
  width: 12px;
  height: 12px;
  margin-left: 4px;
  flex: none;
  background: #fff;
  border: 1px solid #999;
`
const GridWrap = styled.div`
  flex: 1;
  min-height: 0;
  display: flex;
`
const DotStrip = styled.div`
  flex: none;
  width: 12px;
  padding: 2px 0 0 1px;
  background:
    radial-gradient(circle at 1px 1px, #bbb 1px, transparent 1.200px) 3px 14px / 3px 4px repeat-y,
    radial-gradient(circle at 1px 1px, #bbb 1px, transparent 1.200px) 7px 14px / 3px 4px repeat-y;
`
const CloseMark = styled.svg`
  display: block;
`
const GridSide = styled.div`
  flex: none;
  width: 1181px;
  display: flex;
  flex-direction: column;
`
const GridBar = styled(Bar)`
  height: 25px;
  padding: 0 0 2px 3px;
`
const TotalText = styled.span`
  margin-left: 4px;
  color: #222;
`
const GridBox = styled.div`
  flex: 1;
  min-height: 0;
  margin-top: 1px;
  border: 1px solid #bbb;
  border-right-width: 2px;
  background: #fff;
  display: flex;
  flex-direction: column;
  justify-content: space-between;
`
const Grid = styled.div`
  display: grid;
  grid-template-columns: 34px 73px 201px 166px 156px 60px 219px 40px 48px 62px 60px 60px;
  grid-template-rows: 18px 62px 28px 20px;
`
const Cell = styled.div`
  display: flex;
  align-items: center;
  justify-content: ${p => (p.$c ? "center" : "flex-start")};
  padding-left: ${p => (p.$c ? 0 : 1)}px;
  padding-top: ${p => p.$pt ?? 1}px;
  border-right: 1px solid ${p => (p.$dark ? "#000" : "#c0c0c0")};
  border-bottom: 1px solid #c0c0c0;
  background: ${p => p.$bg || "#ccffd6"};
  color: ${p => p.$color || "#111"};
  white-space: nowrap;
  overflow: hidden;
`
const Mono = styled.span`
  font: 11px ${MONO};
  letter-spacing: -0.600px;
`
const ShapeSvg = styled.svg`
  display: block;
  width: 199px;
  height: ${p => p.$h}px;
`
const HEAD = "linear-gradient(#fdfdfd, #efefef)"
const RHEAD = "linear-gradient(#fafafa, #ececec)"

/* ---------- status and taskbar ---------- */
const StatusBar = styled.div`
  flex: none;
  height: 22px;
  padding: 2px 0 1px;
  display: flex;
  gap: 2px;
  font: 11px/17px ${MONO};
  letter-spacing: -0.600px;
`
const StatusCell = styled.div`
  flex: ${p => (p.$w ? "none" : 1)};
  width: ${p => p.$w}px;
  background: linear-gradient(#f4f4f4, #fcfcfc);
  border: 1px solid #ddd;
  padding-left: 1px;
  white-space: nowrap;
  overflow: hidden;
`
const CjkStatus = styled.span`
  font: 12px/17px ${UI};
  letter-spacing: 0;
`
const Taskbar = styled.div`
  flex: none;
  height: 40px;
  background: #0b1418;
  display: flex;
  align-items: stretch;
  color: #fff;
`
const StartBtn = styled.div`
  flex: none;
  width: 48px;
  background: #000;
  display: flex;
  align-items: center;
  justify-content: center;
`
const WinLogo = styled.svg`
  width: 16px;
  height: 16px;
`
const SearchBox = styled.div`
  flex: none;
  width: 344px;
  background: #333;
  color: #9a9a9a;
  display: flex;
  align-items: center;
  padding-left: 9px;
  gap: 6px;
  font-size: 14px;
`
const Cortana = styled.div`
  width: 21px;
  height: 21px;
  border: 3px solid #e4e4e4;
  border-radius: 50%;
  flex: none;
`
const MicWrap = styled.div`
  margin-left: auto;
  margin-right: 12px;
`
const TaskBtn = styled.div`
  flex: none;
  width: 49px;
  display: flex;
  align-items: center;
  justify-content: center;
  background:
    ${p => (p.$line ? "linear-gradient(#76b9ed, #76b9ed) center bottom / 40px 3px no-repeat," : "")}
    ${p => (p.$active ? "#2c3a42" : "transparent")};
`
const PdfLabel = styled.div`
  width: 24px;
  height: 24px;
  background: #a8560c;
  border: 1px solid #777;
  color: #e8d0b0;
  font: bold 8px/22px ${UI};
  text-align: center;
`
const Tray = styled.div`
  flex: none;
  margin-left: 44px;
  display: flex;
  align-items: center;
`
const TrayItem = styled.div`
  flex: none;
  width: ${p => p.$w}px;
  display: flex;
  justify-content: center;
  align-items: center;
`
const Clock = styled.div`
  flex: none;
  width: 60px;
  text-align: center;
  line-height: 19px;
  font-size: 12.500px;
  white-space: nowrap;
`
const NotifWrap = styled.div`
  flex: none;
  position: relative;
  width: 54px;
  display: flex;
  justify-content: center;
`
const NotifBadge = styled.div`
  position: absolute;
  left: 28px;
  top: 8px;
  width: 15px;
  height: 15px;
  border-radius: 50%;
  background: #444;
  border: 1px solid #ccc;
  font: bold 10px/13px ${UI};
  text-align: center;
`
const SLogo = styled.div`
  width: ${p => p.$s}px;
  height: ${p => p.$s}px;
  flex: none;
  border-radius: ${p => p.$s / 5}px;
  background: #f0501c;
  color: #fff;
  font: bold ${p => p.$s - 2}px/${p => p.$s}px ${UI};
  text-align: center;
  transform: rotate(-8deg);
`

/* ---------- floating overlays ---------- */
const ScoreBall = styled.div`
  position: absolute;
  left: 1009px;
  top: -26px;
  width: 45px;
  height: 45px;
  border-radius: 50%;
  background: #3dbb55;
  border: 2px solid #dfe9e0;
  box-shadow: 0 1px 3px #888;
  color: #fff;
  font: bold 12px/14px ${UI};
  text-align: center;
  padding-top: 25px;
`
const ImeBar = styled.div`
  position: absolute;
  left: 758px;
  top: 14px;
  width: 185px;
  height: 23px;
  background: #eef3f9;
  border: 1px solid #a9c0d8;
  display: flex;
  align-items: center;
  padding-left: 9px;
  gap: 7px;
  color: #2f78c4;
  font: bold 14px/16px ${UI};
`
const ImeLogo = styled.div`
  position: absolute;
  left: 738px;
  top: 12px;
`
const ImeComma = styled.span`
  width: 17px;
  text-align: center;
`

/* ---------- the 3d scene ---------- */
const ngon = (cx, cy, r, n) =>
  Array.from({ length: n }, (_, i) => {
    const a = (i * 2 * Math.PI) / n + 0.26
    return `${(cx + r * Math.cos(a)).toFixed(1)},${(cy + r * Math.sin(a)).toFixed(1)}`
  }).join(" ")

const ties = Array.from({ length: 13 }, (_, n) => ({
  tx: 536 + 20.7 * n,
  ty: 323.5 - 22 * n,
  bx: 529.7 + 20.5 * n,
  by: 450 - 22 * n,
}))

const SceneDrawing = () => (
  <Canvas viewBox="170 168 1196 305">
    {/* axis lines */}
    <path d="M170 274L907 458M1180.500 168L894 473M170 437L315 472M200 168L170 200" stroke="#f00" strokeWidth="1.200" fill="none" />
    {/* big circle and its handles */}
    <g stroke="#777" fill="none">
      <circle cx="767" cy="320" r="135" />
      <circle cx="902" cy="320" r="8.500" />
      <circle cx="767" cy="455" r="8.500" />
      <circle cx="632" cy="320" r="8.500" />
      <circle cx="767" cy="185" r="8.500" />
    </g>
    {/* axis bubbles */}
    <polygon points={ngon(183, 440, 12, 12)} fill="none" stroke="#0a800a" />
    <polygon points={ngon(1168, 181, 12.500, 12)} fill="none" stroke="#0a800a" />
    <text x="179" y="445" fill="#bbb" fontSize="13" fontFamily="Liberation Sans">0</text>
    <text x="1164" y="186" fill="#bbb" fontSize="13" fontFamily="Liberation Sans">8</text>
    {/* beam body */}
    <polygon points="445.500,299 516,318 509,455 437,438" fill="#004f00" />
    <polygon points="445.500,299 570,168 660,168 516,318" fill="#006c00" />
    <polygon points="516,318 660,168 688,168 541,323.500" fill="#045204" />
    <polygon points="541,323.500 688,168 785,168 770,185 509,455 516,318" fill="#006000" />
    <polygon points="516,318 541,323.500 533,460 509,455" fill="#045204" />
    {/* rebar */}
    {ties.map((t, i) => (
      <g key={i} fill="none">
        <path d={`M${t.tx - 90} ${t.ty - 21}L${t.tx - 32} ${t.ty - 8}`} stroke="#68b868" strokeWidth="1.600" />
        <path d={`M${t.tx - 32} ${t.ty - 8}L${t.tx} ${t.ty}L${t.bx} ${t.by}L${t.bx - 12} ${t.by - 3}`} stroke="#a89f97" strokeWidth="1.700" />
        <path d={`M${t.bx - 12} ${t.by - 3}L${t.bx - 41} ${t.by - 10}`} stroke="#6ea36e" strokeWidth="1.500" />
      </g>
    ))}
    <path d="M521 440L780 168M511 430L728 168" stroke="#99a799" strokeWidth="0.700" fill="none" />
    {/* box outline */}
    <path d="M516 318L660 168M516 318L509 455" stroke="#90e090" strokeWidth="1.300" fill="none" />
    <path d="M516 318L541 323.500L533 461L509 455M541 323.500L688 168M533 461L809 168" stroke="#fff" strokeWidth="1.600" fill="none" />
    {/* gizmo */}
    <path d="M225 424L226 390" stroke="#0a78f0" strokeWidth="4" />
    <path d="M226 379l4 14h-8z" fill="#0a78f0" />
    <path d="M225 424L242 405" stroke="#10e020" strokeWidth="4" />
    <path d="M246 401l-2 8-6-6z" fill="#10e020" />
    <path d="M225 424L258 433" stroke="#f00" strokeWidth="4" />
    <path d="M271 435l-15 4 2-10z" fill="#f00" />
    <path d="M214 373h9l-9 10h9" stroke="#0a78f0" fill="none" />
    <path d="M248 404l6 5 6-6M254 409v6" stroke="#10e020" fill="none" />
    <path d="M265 423l9 9M274 423l-9 9" stroke="#f00" fill="none" />
  </Canvas>
)

/* ---------- data ---------- */
const leaf = (icon, name, key, extra) => ({ leaf: true, icon, name, key, ...extra })
const group = (name, open) => ({ name, open })
const tree = [
  leaf("shear", "剪力墙", "(Q)"),
  leaf("door", "人防门框墙", "(RF"),
  leaf("brick", "砌体墙", "(Q)"),
  leaf("hidden", "暗梁", "(A)"),
  leaf("rein", "砌体加筋", "(Y)", { last: true }),
  group("门窗洞"),
  group("梁", true),
  leaf("tbeam", "梁", "(L)"),
  leaf("ring", "圈梁", "(E)", { last: true }),
  group("板"),
  group("基础", true),
  leaf("fbeam", "基础梁", "(F)"),
  leaf("raft", "筏板基础", "(M)"),
  leaf("pit", "集水坑", "(K)"),
  leaf("pier", "柱墩", "(Y)"),
  leaf("mainBar", "筏板主筋", "(R)"),
  leaf("negBar", "筏板负筋", "(X)"),
  leaf("iso", "独立基础", "(P)"),
  leaf("strip", "条形基础", "(T)"),
  leaf("cap", "桩承台", "(V)"),
  leaf("strip", "承台梁", "(F)"),
  leaf("pile", "桩", "(U)"),
  leaf("band", "基础板带", "(W)", { last: true }),
  group("其它"),
  group("自定义", true),
  leaf("point", "自定义点", ""),
  leaf("rectLine", "自定义线", "(X)", { sel: true }),
  leaf("hatch", "自定义面", ""),
  leaf("dimCur", "尺寸标注", "(W)", { last: true }),
]

const Chev = ({ open }) => (
  <Chevron viewBox="0 0 10 10">
    <path d={open ? "M1 3l4 4 4-4" : "M3 1l4 4-4 4"} stroke={open ? "#444" : "#aaa"} strokeWidth="1.600" fill="none" />
  </Chevron>
)
const TreeItem = ({ it, rootLine }) => {
  if (!it.leaf)
    return (
      <TreeRow $rootLine={rootLine}>
        <Chev open={it.open} />
        <Ic n={it.open ? "folderOpen" : "folder"} />
        <span>{it.name}</span>
      </TreeRow>
    )
  const body = (
    <>
      <Ic n={it.icon} />
      <span>{it.name}<Key>{it.key}</Key></span>
    </>
  )
  return (
    <TreeRow $leaf $last={it.last} $rootLine={rootLine}>
      {it.sel ? <TreeSelBg>{body}<Ic n="minilist" s={14} /></TreeSelBg> : body}
    </TreeRow>
  )
}

const chevL = "M8 2L4 6l4 4"
const chevR = "M4 2l4 4-4 4"
const chevU = "M2 8l4-4 4 4"
const chevD = "M2 4l4 4 4-4"
const Arr = ({ d }) => (
  <Arrow viewBox="0 0 12 12"><path d={d} stroke="#555" strokeWidth="1.800" fill="none" /></Arrow>
)

const headers = ["", "筋号", "图形", "计算公式", "公式描述"]
const rightHeads = [
  ["长度", "(mm)"], ["根数", ""], ["搭接", ""], ["损耗", "(%)"], ["单重", "(kg)"], ["总重", "(kg)"], ["钢筋归类", ""],
]

const taskIcons = [
  ["taskview", 18], ["fan", 22], ["ieWhite", 22], ["swirl", 20], ["edge", 22], ["ie", 24],
  ["explorer", 22], ["gApp", 26, true], ["ieGreen", 24, true],
]

const App = () => (
  <Page>
    <Global />
    <TitleBar>
      <AppLogo>✣</AppLogo>
      <span>广联达BIM钢筋算量软件 GGJ2013 - [C:\Users\Administrator.PC-20141127NRHM\Desktop\白龙村-2018-02-02-19-24-35(2666版).GGJ12]</span>
    </TitleBar>
    <WinButtons>
      <WinBtn><svg width="11" height="11"><path d="M0 6h11" stroke="#222" /></svg></WinBtn>
      <WinBtn><svg width="11" height="11"><path d="M0.500 3h7v7.500h-7zM3 3V0.500h7.500V8H8" stroke="#222" fill="none" /></svg></WinBtn>
      <WinBtn><svg width="11" height="11"><path d="M0 0l11 11M11 0L0 11" stroke="#222" /></svg></WinBtn>
    </WinButtons>

    <MenuBar>
      {[["文件(F)", 48], ["编辑(E)", 49], ["楼层(L)", 48], ["构件(N)", 52], ["绘图(D)", 51], ["修改(M)", 54], ["钢筋量(Q)", 64], ["视图(V)", 50], ["工具(T)", 49], ["云应用(Y)", 61], ["BIM应用(I)", 70], ["在线服务(S)", 73], ["帮助(H)", 51], ["版本号(B)", 58]].map(([t, w]) => (
        <MenuItem key={t} $w={w}>{t}</MenuItem>
      ))}
      <MenuItem $w={93}><Ic n="newChange" s={14} />新建变更</MenuItem>
      <MenuItem $w={91}>广小二</MenuItem>
      <NewsText $w={162}>挑檐如何跟着坡屋面斜..</NewsText>
      <MenuItem $w={210} $gap={4}>
        <Ic n="user" />13907298339<Caret $ml={6} /><Label $ml={8}>造价豆:0</Label><Ic n="bell" s={16} />
      </MenuItem>
      <More $w={16} $ml={16}>»</More>
    </MenuBar>

    <Row $h={32}>
      <Bar $w={152}>
        <Tool n="new" w={25} gap={0} />
        <Tool n="open" w={37} caret gap={0} />
        <Tool n="save" w={21} />
        <Sep $w={9} />
        <Tool n="undo" w={37} caret gap={7} />
        <More $w={16} $ml={6}>»</More>
      </Bar>
      <Bar $ml={2} $w={506}>
        <Tool {...row1b[0]} />
        <ToolBtn $w={73} $gap={6}><IconSigma>Σ</IconSigma><span>汇总计算</span></ToolBtn>
        <Tools items={row1b.slice(1)} />
      </Bar>
      <More $w={18} $ml={26}>»</More>
      <Bar $w={640}>
        <Tool n="cube" t="三维" w={50} white />
        <Select $w={13} $ml={2} $plain $end><Caret $ml={0} /></Select>
        <Tools items={row1c} />
      </Bar>
      <More $w={14} $ml={7}>»</More>
    </Row>

    <Body>
      <Left>
        <PaneHead>
          <PaneTitle>模块导航栏</PaneTitle>
          <svg width="32" height="12" viewBox="0 0 32 12">
            <path d="M4 1h6v6H4zM2 7h10M7 7v5" stroke="#fff" fill="none" />
            <path d="M21 2l8 8M29 2l-8 8" stroke="#fff" />
          </svg>
        </PaneHead>
        <PaneBtn>工程设置</PaneBtn>
        <PaneBtn>绘图输入</PaneBtn>
        <TreeFrame>
          <TreeTools><Ic n="plus" s={16} /><Ic n="minus" s={16} /></TreeTools>
          <TreeBody>
            <TreeList>
              {tree.map((it, i) => <TreeItem key={i} it={it} rootLine={i > 4} />)}
            </TreeList>
            <VScroll>
              <Arr d={chevU} />
              <ThumbV />
              <Arr d={chevD} />
            </VScroll>
          </TreeBody>
          <HScroll>
            <Arr d={chevL} />
            <ThumbH $w={103} $ml={3} $mr={10} />
            <Arr d={chevR} />
          </HScroll>
        </TreeFrame>
        <PaneBtn>单构件输入</PaneBtn>
        <PaneBtn>报表预览</PaneBtn>
      </Left>

      <Right>
        <Row $h={27} $pl={2} $pt={1} $align="flex-start">
          <Bar $h={23} $w={788}>
            <Grip />
            <Tools items={row2} />
          </Bar>
        </Row>
        <Row $h={29} $pl={2} $pt={1} $align="flex-start">
          <Bar $h={25} $w={565}>
            <Grip />
            <Select $w={58}>第7层<Caret /></Select>
            <Select $w={69} $ml={2}>自定义<Caret /></Select>
            <Select $w={67} $ml={3}>自定义线<Caret /></Select>
            <Select $w={70} $ml={4}>ZDYX-18<Caret /></Select>
            <Tools items={row3a} />
          </Bar>
          <Bar $h={25} $ml={74} $w={422}>
            <Grip $w={7} />
            <Tools items={row3b} />
          </Bar>
        </Row>
        <Row $h={25} $pl={2} $pt={1} $align="flex-start">
          <Bar $h={24} $w={488}>
            <Grip $w={8} />
            <Tools items={row4a} />
            <Select $w={55} $ml={2} $end><Caret /></Select>
            <Select $w={3} $plain />
            <Tools items={row4b} />
          </Bar>
          <Bar $h={24} $ml={2} $w={8}><Grip /></Bar>
        </Row>

        <Scene>
          <SceneDrawing />
          <RebarPanel>
            <RebarTitle>钢筋显示控制面板</RebarTitle>
            <RebarBox>
              {["水平纵筋", "横向钢筋", "显示其它图元", "显示详细公式"].map(t => (
                <CheckRow key={t}><Check />{t}</CheckRow>
              ))}
            </RebarBox>
          </RebarPanel>
        </Scene>

        <Row $h={35} $pl={2} $pt={2} $align="flex-start">
          <Bar $w={208} $h={25}>
            <Grip />
            <Tools items={snapA} />
            <Select $w={2} $plain />
            <Tools items={snapB} />
          </Bar>
          <Bar $w={263} $ml={2} $h={25}>
            <Grip />
            <Tools items={snapC} />
          </Bar>
          <Bar $w={409} $ml={3} $h={25}>
            <Select $w={58} $ml={6}>不偏移<Caret /></Select>
            <Sep $w={9} />
            <Label $c="#888">X=</Label>
            <Spin $w={57} $ml={4}>0<SpinArrows><Up /><Dn /></SpinArrows></Spin>
            <Label $c="#666" $ml={2}>mm</Label>
            <Label $c="#888" $ml={4}>Y=</Label>
            <Spin $w={57} $ml={3}>0<SpinArrows><Up /><Dn /></SpinArrows></Spin>
            <Label $c="#666" $ml={2}>mm</Label>
            <Sep $w={4} />
            <CheckEmpty />
            <Label $ml={9}>旋转</Label>
            <Spin $w={67} $ml={5}>0.000<SpinArrows><Up /><Dn /></SpinArrows></Spin>
            <Label $c="#666" $ml={4}>°</Label>
          </Bar>
        </Row>

        <GridWrap>
          <DotStrip>
            <CloseMark width="11" height="11" viewBox="0 0 11 11">
              <rect x="0.500" y="0.500" width="10" height="10" fill="#eee" stroke="#666" />
              <path d="M1 1l9 9M10 1l-9 9" stroke="#a33" />
            </CloseMark>
          </DotStrip>
          <GridSide>
            <GridBar>
              <Tools items={gridTools} />
              <TotalText>单构件钢筋总重(kg)：33.648</TotalText>
            </GridBar>
            <GridBox>
              <Grid>
                {headers.map((h, i) => (
                  <Cell key={i} $c $pt={2} $bg={i === 1 ? "linear-gradient(#fcdca0, #f3bd5f)" : HEAD} $color={i === 1 ? "#800080" : "#111"}>{h}</Cell>
                ))}
                {rightHeads.map(([h, k]) => (
                  <Cell key={h} $c $pt={2} $bg={HEAD}>{h}{k && <Mono>{k}</Mono>}</Cell>
                ))}

                <Cell $c $bg="#ffd58a" $color="#800080"><Mono>1*</Mono></Cell>
                <Cell $bg="#aeeed8" $dark>横向钢筋<Mono>.1</Mono></Cell>
                <Cell>
                  <ShapeSvg viewBox="291 554 199 60" $h={60}>
                    <path d="M367 557h29q4 0 4 5v38q0 5-4 5h-12" stroke="#111" strokeWidth="1.600" fill="none" />
                    <text x="368" y="571" fontSize="11" fontFamily="Liberation Sans">300</text>
                    <text x="0" y="0" fontSize="9" fontFamily="Liberation Sans" transform="translate(392,574) rotate(-90)">700</text>
                    <text x="0" y="0" fontSize="9" fontFamily="Liberation Sans" transform="translate(398,566) rotate(-90)">77</text>
                    <text x="400" y="612" fontSize="9" fontFamily="Liberation Sans">100</text>
                    <text x="403" y="612" fontSize="9" fontFamily="Liberation Sans">170</text>
                  </ShapeSvg>
                </Cell>
                <Cell><Mono>300+700+100</Mono></Cell>
                <Cell>端头+净长+端头</Cell>
                <Cell><Mono>1100</Mono></Cell>
                <Cell><Mono>57</Mono></Cell>
                <Cell><Mono>0</Mono></Cell>
                <Cell><Mono>0</Mono></Cell>
                <Cell><Mono>0.435</Mono></Cell>
                <Cell><Mono>24.767</Mono></Cell>
                <Cell>&nbsp;直筋</Cell>

                <Cell $c $bg={RHEAD}><Mono>2</Mono></Cell>
                <Cell $dark>水平纵筋<Mono>.1</Mono></Cell>
                <Cell>
                  <ShapeSvg viewBox="291 616 199 26" $h={26}>
                    <path d="M313 633.500h150" stroke="#111" strokeWidth="1.600" />
                    <text x="380" y="631" fontSize="11" fill="#f00" fontFamily="Liberation Sans">11050</text>
                  </ShapeSvg>
                </Cell>
                <Cell><Mono>11050</Mono></Cell>
                <Cell>净长</Cell>
                <Cell><Mono>11050</Mono></Cell>
                <Cell><Mono>3</Mono></Cell>
                <Cell><Mono>336</Mono></Cell>
                <Cell><Mono>0</Mono></Cell>
                <Cell><Mono>2.96</Mono></Cell>
                <Cell><Mono>8.881</Mono></Cell>
                <Cell>&nbsp;直筋</Cell>

                <Cell $c $bg={RHEAD}><Mono>3</Mono></Cell>
                <Cell $bg="#fff" $dark />
                {Array.from({ length: 10 }, (_, i) => <Cell key={i} $bg="#fff" />)}
              </Grid>
              <HScroll $h={15} $pl={4}>
                <Arr d={chevL} />
                <ThumbH $w={573} $ml={432} $mr={143} />
                <Arr d={chevR} />
              </HScroll>
            </GridBox>
          </GridSide>
        </GridWrap>
      </Right>
    </Body>

    <StatusBar>
      <StatusCell $w={148}>X=113979 Y=-6294</StatusCell>
      <StatusCell $w={77}><CjkStatus>层高</CjkStatus>:2.8m</StatusCell>
      <StatusCell $w={98}><CjkStatus>底标高</CjkStatus>:20.35m</StatusCell>
      <StatusCell $w={47}>1(1)</StatusCell>
      <StatusCell />
      <StatusCell $w={70}>312.7 FPS</StatusCell>
    </StatusBar>

    <Taskbar>
      <StartBtn>
        <WinLogo viewBox="0 0 16 16"><path d="M0 2.500l7-1v6H0zM8 1.300L16 0v7.500H8zM0 8.500h7v6l-7-1zM8 8.500h8V16l-8-1.300z" fill="#fff" /></WinLogo>
      </StartBtn>
      <SearchBox>
        <Cortana />
        <span>在这里输入你要搜索的内容</span>
        <MicWrap><Ic n="mic" s={18} /></MicWrap>
      </SearchBox>
      {taskIcons.map(([n, s, line]) => (
        <TaskBtn key={n} $line={line}><Ic n={n} s={s} /></TaskBtn>
      ))}
      <TaskBtn $line $active>
        <svg width="24" height="24" viewBox="0 0 24 24">
          <rect width="24" height="24" rx="4" fill="#1c96f0" />
          <path d="M10 6v12M6 11h12M14 6q-2-1-4 0M18 11q1 2 0 4M10 18q3 1 5-1" stroke="#fff" strokeWidth="2.200" fill="none" />
        </svg>
      </TaskBtn>
      <TaskBtn $line><Ic n="note" s={24} /></TaskBtn>
      <TaskBtn $line><PdfLabel>PDF</PdfLabel></TaskBtn>
      <Tray>
        <TrayItem $w={24}>链接</TrayItem>
        <TrayItem $w={36}><Ic n="up2" s={14} /></TrayItem>
        <TrayItem $w={14}><Ic n="batt" s={16} /></TrayItem>
        <TrayItem $w={34}><Ic n="wifi" s={15} /></TrayItem>
        <TrayItem $w={8}><Ic n="vol" s={16} /></TrayItem>
        <TrayItem $w={48}><Ic n="kbd" s={22} /></TrayItem>
        <TrayItem $w={10}>中</TrayItem>
        <TrayItem $w={48}><SLogo $s={14}>S</SLogo></TrayItem>
        <Clock>11:19<br />2018/7/9</Clock>
        <NotifWrap>
          <Ic n="notifBox" s={16} />
          <NotifBadge>1</NotifBadge>
        </NotifWrap>
      </Tray>
    </Taskbar>

    <ScoreBall>69</ScoreBall>
    <ImeBar>
      <span>英</span>
      <ImeComma>ʼ</ImeComma>
      <Ic n="smile" s={16} />
      <Ic n="imeMic" s={16} />
      <Ic n="imeKbd" s={16} />
      <Ic n="imeUser" s={16} />
      <Ic n="shirt" s={15} />
      <Ic n="wrench" s={15} />
    </ImeBar>
    <ImeLogo><SLogo $s={25}>S</SLogo></ImeLogo>
  </Page>
)

export default App
